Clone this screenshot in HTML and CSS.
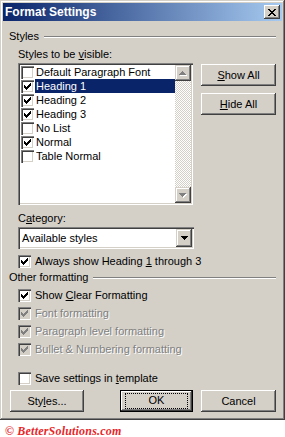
FILE: index.html
```html
<!doctype html>
<html lang="en">
<head>
<meta charset="UTF-8">
<title>Format Settings</title>
<link rel="stylesheet" href="styles.css">
</head>
<body>
<svg class="defs" width="0" height="0">
    <symbol id="tick" viewBox="0 0 13 13">
        <path d="M9 3h1v1h-1z M8 4h2v1h-2z M3 5h1v1h-1z M7 5h3v1h-3z M3 6h2v1h-2z M6 6h3v1h-3z M3 7h5v1h-5z M4 8h3v1h-3z M5 9h1v1h-1z"/>
    </symbol>
</svg>
<div class="dialog">
    <div class="titlebar">
        <span class="title">Format Settings</span>
        <span class="close">
            <svg width="8" height="7" viewBox="0 0 8 7" shape-rendering="crispEdges"><path d="M0 0h2v1h-2z M6 0h2v1h-2z M1 1h2v1h-2z M5 1h2v1h-2z M2 2h4v1h-4z M3 3h2v1h-2z M2 4h4v1h-4z M1 5h2v1h-2z M5 5h2v1h-2z M0 6h2v1h-2z M6 6h2v1h-2z"/></svg>
        </span>
    </div>
    <div class="content">
        <div class="group"><span>Styles</span><i class="rule"></i></div>
        <div class="label indent">Styles to be <u>v</u>isible:</div>
        <div class="list-row">
            <div class="listbox">
                <div class="items">
                    <div class="item"><span class="check"></span><span class="item-text">Default Paragraph Font</span></div>
                    <div class="item selected"><span class="check"><svg><use href="#tick"/></svg></span><span class="item-text">Heading 1</span></div>
                    <div class="item"><span class="check"><svg><use href="#tick"/></svg></span><span class="item-text">Heading 2</span></div>
                    <div class="item"><span class="check"><svg><use href="#tick"/></svg></span><span class="item-text">Heading 3</span></div>
                    <div class="item"><span class="check"></span><span class="item-text">No List</span></div>
                    <div class="item"><span class="check"><svg><use href="#tick"/></svg></span><span class="item-text">Normal</span></div>
                    <div class="item"><span class="check"></span><span class="item-text">Table Normal</span></div>
                </div>
                <div class="scrollbar">
                    <div class="sbtn">
                        <svg width="8" height="5" viewBox="0 0 8 5" shape-rendering="crispEdges"><path fill="#fff" d="M4 1h1v1h1v1h1v1h1v1h-7v-1h1z"/><path fill="#808080" d="M3 0h1v1h1v1h1v1h1v1h-7v-1h1v-1h1z"/></svg>
                    </div>
                    <div class="track"></div>
                    <div class="sbtn">
                        <svg width="8" height="5" viewBox="0 0 8 5" shape-rendering="crispEdges"><path fill="#fff" d="M1 1h7v1h-1v1h-1v1h-1v1h-1v-1h-1v-1h-1z"/><path fill="#808080" d="M0 0h7v1h-1v1h-1v1h-1v1h-1v-1h-1v-1h-1z"/></svg>
                    </div>
                </div>
            </div>
            <div class="side">
                <div class="btn"><u>S</u>how All</div>
                <div class="btn"><u>H</u>ide All</div>
            </div>
        </div>
        <div class="label indent cat">C<u>a</u>tegory:</div>
        <div class="combo indent">
            <span class="combo-text">Available styles</span>
            <span class="drop">
                <svg width="7" height="4" viewBox="0 0 7 4" shape-rendering="crispEdges"><path d="M0 0h7v1h-1v1h-1v1h-1v1h-1v-1h-1v-1h-1z"/></svg>
            </span>
        </div>
        <div class="option indent always"><span class="check"><svg><use href="#tick"/></svg></span><span>Always show Heading <u>1</u> through 3</span></div>
        <div class="group other"><span>Other formatting</span><i class="rule"></i></div>
        <div class="option indent first"><span class="check"><svg><use href="#tick"/></svg></span><span>Show <u>C</u>lear Formatting</span></div>
        <div class="option indent disabled"><span class="check"><svg><use href="#tick"/></svg></span><span>Font formatting</span></div>
        <div class="option indent disabled"><span class="check"><svg><use href="#tick"/></svg></span><span>Paragraph level formatting</span></div>
        <div class="option indent disabled"><span class="check"><svg><use href="#tick"/></svg></span><span>Bullet &amp; Numbering formatting</span></div>
        <div class="option indent save"><span class="check"></span><span>Save settings in <u>t</u>emplate</span></div>
        <div class="buttons">
            <div class="btn styles">Sty<u>l</u>es...</div>
            <div class="btn ok"><span class="focus">OK</span></div>
            <div class="btn">Cancel</div>
        </div>
    </div>
</div>
<p class="copyright">© BetterSolutions.com</p>
</body>
</html>
```
FILE: styles.css
```css
*{
    margin: 0;
    padding: 0;
    box-sizing: border-box;
}
body{
    background: #fff;
    font: 11px "Liberation Sans", Arial, sans-serif;
    color: #000;
}
.defs{
    position: absolute;
}
u{
    text-underline-offset: 1px;
}
.dialog{
    width: 285px;
    height: 420px;
    padding: 3px;
    background: #d4d0c8;
    box-shadow: inset -1px -1px #404040, inset 1px 1px #d4d0c8, inset -2px -2px #808080, inset 2px 2px #fff;
    display: flex;
    flex-direction: column;
}
.titlebar{
    height: 18px;
    padding: 0 2px;
    display: flex;
    align-items: center;
    justify-content: space-between;
    background: linear-gradient(to right, #0a246a, #a6caf0);
}
.title{
    color: #fff;
    font-weight: bold;
    font-size: 12px;
}
.close{
    width: 16px;
    height: 14px;
    display: flex;
    align-items: center;
    justify-content: center;
    background: #d4d0c8;
    box-shadow: inset -1px -1px #404040, inset 1px 1px #fff, inset -2px -2px #808080;
}
.content{
    flex: 1;
    padding: 0 6px;
    display: flex;
    flex-direction: column;
}
.group{
    display: flex;
    height: 13px;
    line-height: 13px;
    margin-top: 9px;
}
.group.other{
    margin-top: 3px;
}
.rule{
    flex: 1;
    height: 2px;
    margin-top: 6px;
    margin-left: 5px;
    border-top: 1px solid #808080;
    border-bottom: 1px solid #fff;
}
.label{
    height: 13px;
    line-height: 13px;
    margin-top: 5px;
}
.label.cat{
    margin-top: 7px;
}
.indent{
    margin-left: 9px;
}
.list-row{
    display: flex;
    gap: 8px;
    margin-top: 2px;
    margin-left: 9px;
}
.listbox{
    width: 176px;
    height: 142px;
    padding: 2px;
    display: flex;
    background: #fff;
    box-shadow: inset 1px 1px #808080, inset 2px 2px #404040, inset -1px -1px #fff, inset -2px -2px #d4d0c8;
}
.items{
    flex: 1;
    padding-left: 1px;
}
.item{
    height: 14px;
    display: flex;
    align-items: center;
}
.item-text{
    flex: 1;
    height: 14px;
    line-height: 14px;
    margin-left: 1px;
    padding-left: 1px;
}
.item.selected .item-text{
    background: #0a246a;
    color: #fff;
}
.check{
    width: 13px;
    height: 13px;
    flex: none;
    background: #fff;
    box-shadow: inset 1px 1px #808080, inset 2px 2px #404040, inset -1px -1px #fff, inset -2px -2px #d4d0c8;
}
.check svg{
    display: block;
    width: 13px;
    height: 13px;
    fill: #000;
    shape-rendering: crispEdges;
}
.scrollbar{
    width: 16px;
    display: flex;
    flex-direction: column;
}
.sbtn{
    height: 16px;
    display: flex;
    align-items: center;
    justify-content: center;
    background: #d4d0c8;
    box-shadow: inset -1px -1px #404040, inset 1px 1px #d4d0c8, inset -2px -2px #808080, inset 2px 2px #fff;
}
.track{
    flex: 1;
    background: repeating-conic-gradient(#fff 0 25%, #d4d0c8 0 50%) 0 0 / 2px 2px;
}
.side{
    display: flex;
    flex-direction: column;
    gap: 7px;
    padding-top: 1px;
}
.btn{
    width: 75px;
    height: 22px;
    display: flex;
    align-items: center;
    justify-content: center;
    background: #d4d0c8;
    box-shadow: inset -1px -1px #404040, inset 1px 1px #fff, inset -2px -2px #808080, inset 2px 2px #d4d0c8;
}
.combo{
    width: 176px;
    height: 22px;
    margin-top: 2px;
    padding: 2px;
    display: flex;
    align-items: center;
    background: #fff;
    box-shadow: inset 1px 1px #808080, inset 2px 2px #404040, inset -1px -1px #fff, inset -2px -2px #d4d0c8;
}
.combo-text{
    flex: 1;
    padding-left: 2px;
}
.drop{
    width: 16px;
    height: 18px;
    display: flex;
    align-items: center;
    justify-content: center;
    background: #d4d0c8;
    box-shadow: inset -1px -1px #404040, inset 1px 1px #d4d0c8, inset -2px -2px #808080, inset 2px 2px #fff;
}
.option{
    height: 13px;
    display: flex;
    align-items: center;
    gap: 4px;
    margin-top: 5px;
    line-height: 13px;
}
.option.always{
    margin-top: 6px;
}
.option.first{
    margin-top: 5px;
}
.option.save{
    margin-top: 16px;
}
.option.disabled{
    color: #808080;
    text-shadow: 1px 1px #fff;
}
.option.disabled .check{
    background: #d4d0c8;
}
.option.disabled .check svg{
    fill: #808080;
}
.buttons{
    display: flex;
    gap: 8px;
    margin-top: 5px;
    padding-left: 1px;
}
.btn.styles{
    width: 74px;
    margin-right: auto;
}
.btn.ok{
    width: 73px;
    border: 1px solid #000;
}
.focus{
    width: 61px;
    height: 14px;
    line-height: 12px;
    text-align: center;
    outline: 1px dotted #000;
}
.copyright{
    margin: 4px 0 0 5px;
    font: italic bold 12px "Liberation Serif", serif;
    color: #e8262a;
    letter-spacing: 0.2px;
}
```
